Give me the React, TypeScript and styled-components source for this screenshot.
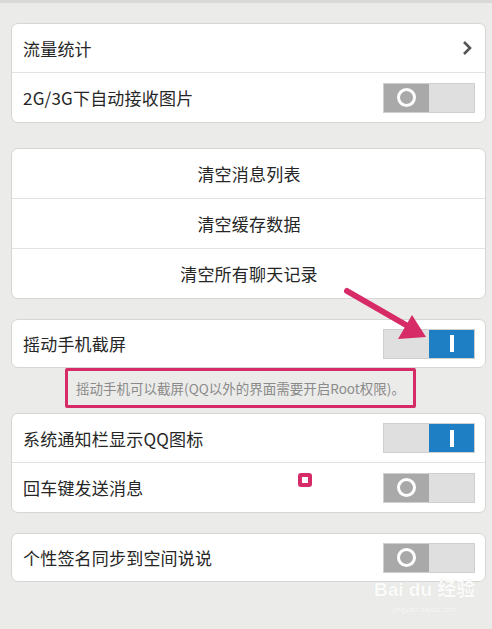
import styled, { createGlobalStyle } from "styled-components";

const GlobalStyle = createGlobalStyle`
  html, body {
    margin: 0;
    padding: 0;
    background: #ebebe9;
  }
  body {
    font-family: "Noto Sans CJK SC", "Noto Sans", sans-serif;
  }
`;

const Page = styled.div`
  position: relative;
  width: 492px;
  height: 629px;
  overflow: hidden;
  background: #ebebe9;
  border-top: 3px solid #d9d9d7;
  box-sizing: border-box;
  padding: 20px 6px 0 11px;
  display: flex;
  flex-direction: column;
`;

const Card = styled.div<{ $gap: number }>`
  margin-top: ${(p) => p.$gap}px;
  background: #fff;
  border: 1px solid #d6d6d4;
  border-radius: 7px;
  display: flex;
  flex-direction: column;
`;

const Row = styled.div<{ $h: number; $center?: boolean }>`
  height: ${(p) => p.$h}px;
  display: flex;
  align-items: center;
  justify-content: ${(p) => (p.$center ? "center" : "space-between")};
  padding: 0 10px 0 11px;
  font-size: 17px;
  color: #262626;
  & + & {
    border-top: 1px solid #e2e2e0;
  }
`;

const Label = styled.span`
  letter-spacing: 0.2px;
`;

const Chevron = styled.svg`
  width: 12px;
  height: 16px;
  margin-right: 2px;
`;

const ToggleBox = styled.div`
  width: 92px;
  height: 30px;
  display: flex;
  border: 1px solid #cfcfcf;
  box-sizing: border-box;
`;

const Half = styled.div<{ $tone: "dark" | "light" | "blue" }>`
  flex: 1;
  display: flex;
  align-items: center;
  justify-content: center;
  background: ${(p) =>
    p.$tone === "dark" ? "#a9a9a9" : p.$tone === "blue" ? "#1f7fc4" : "#dfdfdf"};
`;

const Ring = styled.div`
  width: 13px;
  height: 13px;
  border: 3px solid #fff;
  border-radius: 50%;
`;

const Bar = styled.div`
  width: 4px;
  height: 17px;
  background: #fff;
`;

const Hint = styled.div`
  margin: 0 70px 0 54px;
  height: 40px;
  border: 3px solid #d62b66;
  border-radius: 2px;
  box-sizing: border-box;
  display: flex;
  align-items: center;
  justify-content: center;
  font-size: 13.5px;
  color: #8a8a8a;
  white-space: nowrap;
`;

const Overlay = styled.svg`
  position: absolute;
  left: 0;
  top: 0;
  pointer-events: none;
`;

const Marker = styled.div`
  position: absolute;
  left: 298px;
  top: 470px;
  width: 14px;
  height: 14px;
  box-sizing: border-box;
  border: 4px solid #d62b66;
  border-radius: 3px;
  background: #fff;
`;

const Watermark = styled.div`
  position: absolute;
  left: 374px;
  top: 576px;
  display: flex;
  flex-direction: column;
  align-items: center;
  white-space: nowrap;
  color: #fbfbfa;
  text-shadow: 0 0 1px #dcdcda;
  font-family: "Liberation Sans", "Noto Sans CJK SC", sans-serif;
`;

const MarkTitle = styled.div`
  font-size: 19px;
  font-weight: bold;
  line-height: 22px;
`;

const MarkUrl = styled.div`
  font-size: 8px;
  line-height: 10px;
  margin-top: 4px;
`;

function Toggle({ on }: { on: boolean }) {
  return (
    <ToggleBox>
      {on ? (
        <>
          <Half $tone="light" />
          <Half $tone="blue">
            <Bar />
          </Half>
        </>
      ) : (
        <>
          <Half $tone="dark">
            <Ring />
          </Half>
          <Half $tone="light" />
        </>
      )}
    </ToggleBox>
  );
}

export default function App() {
  return (
    <Page>
      <GlobalStyle />
      <Card $gap={0}>
        <Row $h={48}>
          <Label>流量统计</Label>
          <Chevron viewBox="0 0 12 16">
            <path d="M3 2 L9 8 L3 14" fill="none" stroke="#555" strokeWidth="2.6" />
          </Chevron>
        </Row>
        <Row $h={49}>
          <Label>2G/3G下自动接收图片</Label>
          <Toggle on={false} />
        </Row>
      </Card>

      <Card $gap={25}>
        <Row $h={49} $center>
          <Label>清空消息列表</Label>
        </Row>
        <Row $h={49} $center>
          <Label>清空缓存数据</Label>
        </Row>
        <Row $h={49} $center>
          <Label>清空所有聊天记录</Label>
        </Row>
      </Card>

      <Card $gap={20}>
        <Row $h={47}>
          <Label>摇动手机截屏</Label>
          <Toggle on={true} />
        </Row>
      </Card>
      <Hint>摇动手机可以截屏(QQ以外的界面需要开启Root权限)。</Hint>

      <Card $gap={5}>
        <Row $h={48}>
          <Label>系统通知栏显示QQ图标</Label>
          <Toggle on={true} />
        </Row>
        <Row $h={49}>
          <Label>回车键发送消息</Label>
          <Toggle on={false} />
        </Row>
      </Card>

      <Card $gap={20}>
        <Row $h={47}>
          <Label>个性签名同步到空间说说</Label>
          <Toggle on={false} />
        </Row>
      </Card>

      <Overlay width="492" height="629" viewBox="0 0 492 629">
        <path d="M347 288 L406 322" stroke="#d62b66" strokeWidth="6" strokeLinecap="round" />
        <path d="M426 334 L398 336 L412 312 Z" fill="#d62b66" />
      </Overlay>
      <Marker />
      <Watermark>
        <MarkTitle>Bai du 经验</MarkTitle>
        <MarkUrl>jingyan.baidu.com</MarkUrl>
      </Watermark>
    </Page>
  );
}
